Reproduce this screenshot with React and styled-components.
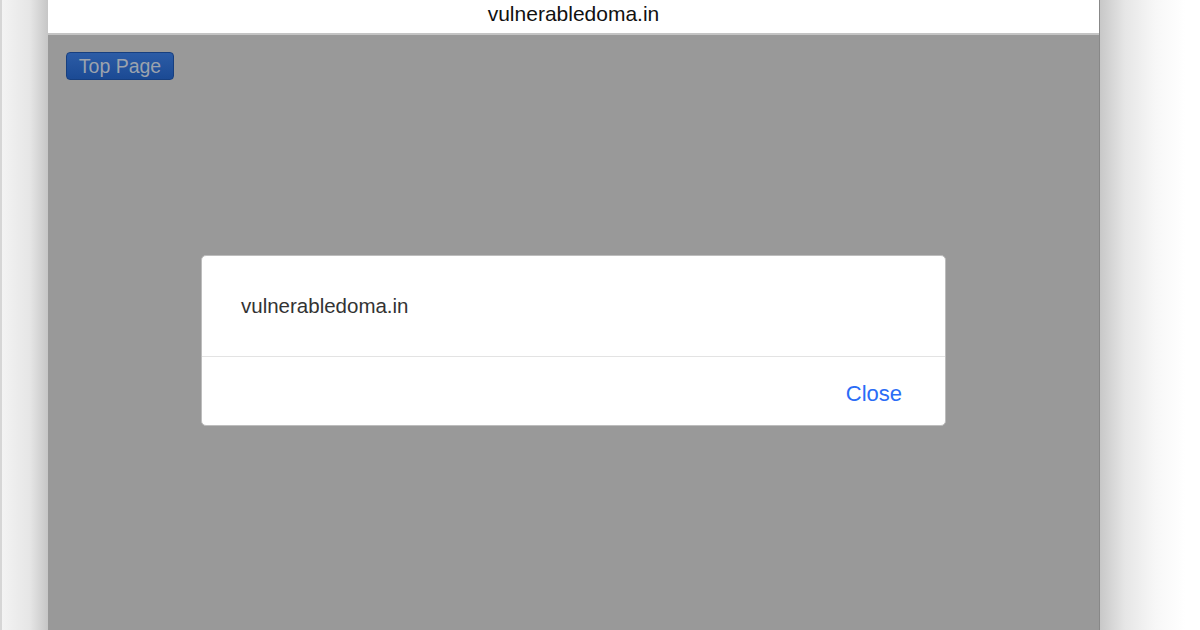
import React from "react";
import styled, { createGlobalStyle } from "styled-components";

const GlobalStyle = createGlobalStyle`
  html, body {
    margin: 0;
    padding: 0;
    background: #ffffff;
  }
  body {
    font-family: "Liberation Sans", Arial, sans-serif;
  }
`;

export default function App() {
  return (
    <>
      <GlobalStyle />
      <Page>
        <LeftEdge />
        <Window>
          <TitleBar>vulnerabledoma.in</TitleBar>
          <Content>
            <TopButton>Top Page</TopButton>
            <Backdrop>
              <Dialog>
                <DialogBody>vulnerabledoma.in</DialogBody>
                <DialogFooter>
                  <CloseButton>Close</CloseButton>
                </DialogFooter>
              </Dialog>
            </Backdrop>
          </Content>
        </Window>
        <RightShadow />
      </Page>
    </>
  );
}

const Page = styled.div`
  display: flex;
  width: 1200px;
  height: 630px;
  overflow: hidden;
`;

const LeftEdge = styled.div`
  width: 46px;
  flex-shrink: 0;
  border-left: 2px solid #d6d6d6;
  background: linear-gradient(to right, #f3f3f3 0%, #e6e6e6 60%, #c6c6c6 100%);
`;

const Window = styled.div`
  width: 1051px;
  flex-shrink: 0;
  display: flex;
  flex-direction: column;
  border-right: 1px solid #888888;
`;

const TitleBar = styled.div`
  height: 33px;
  background: #ffffff;
  border-bottom: 2px solid #c4c4c4;
  display: flex;
  align-items: center;
  justify-content: center;
  font-size: 21px;
  line-height: 28px;
  color: #111111;
  padding-bottom: 5px;
  box-sizing: border-box;
  height: 35px;
`;

const Content = styled.div`
  position: relative;
  flex: 1;
  background: #999999;
  padding: 17px 18px;
`;

const TopButton = styled.button`
  width: 108px;
  height: 28px;
  border: 1px solid #173f7f;
  border-radius: 4px;
  background: linear-gradient(to bottom, #2c5ca6, #1b4a94);
  color: #9ca3ad;
  font-family: "Liberation Sans", Arial, sans-serif;
  font-size: 19.5px;
  padding: 0 0 1px;
  line-height: 26px;
`;

const Backdrop = styled.div`
  position: absolute;
  inset: 0;
  display: flex;
  justify-content: center;
  padding-top: 220px;
`;

const Dialog = styled.div`
  width: 745px;
  height: 171px;
  background: #ffffff;
  border: 1px solid #bdbdbd;
  border-radius: 5px;
  box-sizing: border-box;
  display: flex;
  flex-direction: column;
`;

const DialogBody = styled.div`
  height: 101px;
  border-bottom: 1px solid #e3e3e3;
  padding: 38px 0 0 39px;
  box-sizing: border-box;
  font-size: 20.5px;
  color: #333333;
`;

const DialogFooter = styled.div`
  flex: 1;
  display: flex;
  justify-content: flex-end;
  align-items: center;
  padding: 6px 43px 0 0;
`;

const CloseButton = styled.span`
  font-size: 22px;
  color: #2a6cf6;
`;

const RightShadow = styled.div`
  flex: 1;
  background: linear-gradient(to right, #c8c8c8 0px, #e6e6e6 25px, #f7f7f7 55px, #ffffff 85px);
`;
